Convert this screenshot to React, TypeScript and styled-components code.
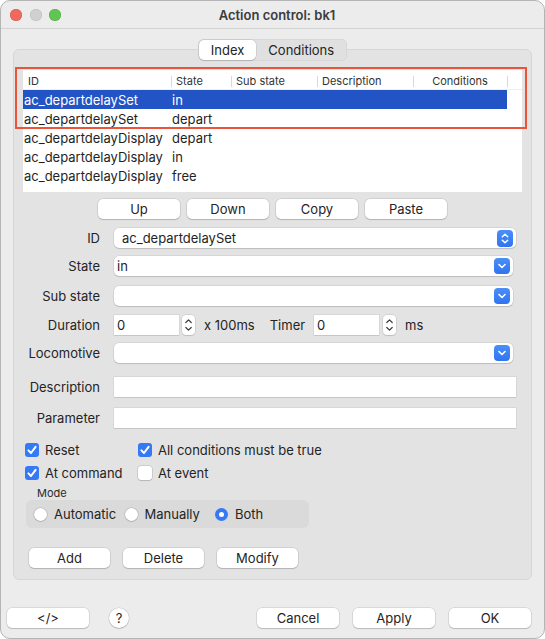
import React from 'react';
import styled, { createGlobalStyle } from 'styled-components';

const GlobalStyle = createGlobalStyle`
  * { box-sizing: border-box; }
  html, body { margin: 0; padding: 0; background: #ffffff; }
  body {
    font-family: Inter, "Liberation Sans", Arial, sans-serif;
    font-size: 13px;
    color: #242424;
  }
`;

const Window = styled.div`
  width: 545px;
  height: 639px;
  background: #ececec;
  border: 1px solid #b4b4b4;
  border-radius: 10px;
  overflow: hidden;
  display: flex;
  flex-direction: column;
`;

const TitleBar = styled.div`
  height: 28px;
  border-bottom: 1px solid #d3d3d3;
  display: grid;
  grid-template-columns: 1fr auto 1fr;
  align-items: center;
  padding-left: 9px;
`;

const Lights = styled.div`
  display: flex;
  gap: 7.5px;
`;

const Light = styled.span<{ $color: string; $edge: string }>`
  width: 12px;
  height: 12px;
  border-radius: 50%;
  background: ${p => p.$color};
  box-shadow: inset 0 0 0 0.5px ${p => p.$edge};
`;

const Title = styled.div`
  font-weight: 600;
  font-size: 13px;
  color: #3b3b3b;
`;

const TabBar = styled.div`
  align-self: center;
  margin-top: 10px;
  margin-bottom: -12px;
  position: relative;
  z-index: 1;
  display: flex;
  padding: 1px;
  height: 22px;
  background: #e0e0e0;
  border-radius: 6px;
  box-shadow: inset 0 0 0 0.5px #cfcfcf;
`;

const Tab = styled.div<{ $active?: boolean }>`
  height: 20px;
  padding: 0 12px;
  display: flex;
  align-items: center;
  border-radius: 5px;
  background: ${p => (p.$active ? '#ffffff' : 'transparent')};
  box-shadow: ${p => (p.$active ? '0 0 0 0.5px rgba(0,0,0,0.12), 0 1px 1px rgba(0,0,0,0.12)' : 'none')};
  color: #242424;
`;

const Panel = styled.div`
  margin: 0 12px;
  background: #e3e3e3;
  border: 1px solid #d6d6d6;
  border-radius: 6px;
  padding: 20px 9px 11px 9px;
  display: flex;
  flex-direction: column;
`;

const Table = styled.div`
  position: relative;
  height: 122px;
  background: #ffffff;
  padding-top: 2px;
`;

const Highlight = styled.div`
  position: absolute;
  left: -8px;
  top: -3px;
  width: 512px;
  height: 62px;
  border: 2px solid #e8553a;
  pointer-events: none;
`;

const HeaderRow = styled.div`
  display: grid;
  grid-template-columns: 148px 60px 86px 96px 94px 1fr;
  height: 18px;
  border-bottom: 1px solid #efefef;
  font-size: 11px;
  color: #333;
`;

const HeaderCell = styled.div<{ $sep?: boolean; $center?: boolean }>`
  position: relative;
  display: flex;
  align-items: center;
  justify-content: ${p => (p.$center ? 'center' : 'flex-start')};
  padding-left: ${p => (p.$center ? '0' : '5px')};

  &::before {
    content: '';
    display: ${p => (p.$sep ? 'block' : 'none')};
    position: absolute;
    left: 0;
    top: 4px;
    width: 1px;
    height: 11px;
    background: #d8d8d8;
  }
`;

const Row = styled.div<{ $selected?: boolean }>`
  display: grid;
  grid-template-columns: 148px 60px 86px 96px 94px;
  width: 484px;
  height: 19px;
  align-items: center;
  background: ${p => (p.$selected ? '#2254c6' : 'transparent')};
  color: ${p => (p.$selected ? '#ffffff' : '#1f1f1f')};
`;

const Cell = styled.div`
  padding-left: 1px;
  white-space: nowrap;
`;

const ButtonRow = styled.div<{ $mt: number; $gap: number; $justify?: string; $ml?: number }>`
  display: flex;
  gap: ${p => p.$gap}px;
  justify-content: ${p => p.$justify || 'flex-start'};
  margin-top: ${p => p.$mt}px;
  margin-left: ${p => p.$ml || 0}px;
`;

const Button = styled.button<{ $w?: number }>`
  width: ${p => p.$w || 82}px;
  height: 20px;
  padding: 0;
  border: none;
  border-radius: 5px;
  background: #ffffff;
  box-shadow: 0 0 0 0.5px rgba(0, 0, 0, 0.16), 0 1px 1px rgba(0, 0, 0, 0.14);
  font-family: inherit;
  font-size: 13px;
  color: #242424;
`;

const FormRow = styled.div<{ $mt: number }>`
  display: flex;
  align-items: center;
  height: 20px;
  margin-top: ${p => p.$mt}px;
`;

const Label = styled.div`
  width: 77px;
  margin-right: 14px;
  text-align: right;
  white-space: nowrap;
`;

const Combo = styled.div<{ $w: number; $pl: number }>`
  width: ${p => p.$w}px;
  height: 20px;
  display: flex;
  align-items: center;
  justify-content: space-between;
  padding: 0 3px 0 ${p => p.$pl}px;
  background: #ffffff;
  border-radius: 5px;
  box-shadow: 0 0 0 0.5px rgba(0, 0, 0, 0.12), 0 1px 1px rgba(0, 0, 0, 0.12);
`;

const BlueKnob = styled.div<{ $h: number }>`
  width: 16px;
  height: ${p => p.$h}px;
  border-radius: 4px;
  background: linear-gradient(#4a8ff8, #2f74f0);
  display: flex;
  align-items: center;
  justify-content: center;
`;

const TextField = styled.div<{ $w: number }>`
  width: ${p => p.$w}px;
  height: 20px;
  background: #ffffff;
  padding-left: 3px;
  display: flex;
  align-items: center;
  box-shadow: 0 0 0 0.5px rgba(0, 0, 0, 0.1), 0 1px 0 rgba(0, 0, 0, 0.08);
`;

const Stepper = styled.div<{ $ml: number }>`
  width: 13px;
  height: 20px;
  margin-left: ${p => p.$ml}px;
  background: #ffffff;
  border-radius: 4px;
  box-shadow: 0 0 0 0.5px rgba(0, 0, 0, 0.14), 0 1px 1px rgba(0, 0, 0, 0.1);
  display: flex;
`;

const Unit = styled.span<{ $ml: number }>`
  margin-left: ${p => p.$ml}px;
  white-space: nowrap;
`;

const Checks = styled.div`
  display: grid;
  grid-template-columns: 113px auto;
  row-gap: 9px;
  margin-top: 15px;
  margin-left: 2px;
`;

const CheckItem = styled.div`
  display: flex;
  align-items: center;
  gap: 6px;
  height: 14px;
`;

const Box = styled.div<{ $on?: boolean }>`
  width: 14px;
  height: 14px;
  border-radius: 3px;
  background: ${p => (p.$on ? '#3479f5' : '#ffffff')};
  box-shadow: ${p => (p.$on ? 'none' : '0 0 0 0.5px rgba(0,0,0,0.2), 0 1px 1px rgba(0,0,0,0.1)')};
  display: flex;
  align-items: center;
  justify-content: center;
`;

const ModeLabel = styled.div`
  font-size: 11px;
  margin: 7px 0 1px 14px;
  height: 12px;
  line-height: 12px;
  color: #2a2a2a;
`;

const Group = styled.div`
  width: 283px;
  height: 28px;
  margin-left: 3px;
  padding-left: 8px;
  background: #dadada;
  border-radius: 6px;
  display: grid;
  grid-template-columns: repeat(3, 90.5px);
  align-items: center;
`;

const RadioItem = styled.div`
  display: flex;
  align-items: center;
  gap: 7px;
`;

const Radio = styled.div<{ $on?: boolean }>`
  width: 13px;
  height: 13px;
  border-radius: 50%;
  background: ${p => (p.$on ? '#3479f5' : '#ffffff')};
  box-shadow: ${p => (p.$on ? 'none' : '0 0 0 0.5px rgba(0,0,0,0.2), 0 1px 1px rgba(0,0,0,0.1)')};
  display: flex;
  align-items: center;
  justify-content: center;

  &::after {
    content: '';
    display: ${p => (p.$on ? 'block' : 'none')};
    width: 5px;
    height: 5px;
    border-radius: 50%;
    background: #ffffff;
  }
`;

const Footer = styled.div`
  margin-top: auto;
  padding: 0 13px 10px 6px;
  display: flex;
  align-items: center;
`;

const HelpButton = styled.div`
  width: 20px;
  height: 20px;
  margin-left: 20px;
  border-radius: 50%;
  background: #ffffff;
  box-shadow: 0 0 0 0.5px rgba(0, 0, 0, 0.16), 0 1px 1px rgba(0, 0, 0, 0.14);
  display: flex;
  align-items: center;
  justify-content: center;
  font-size: 13px;
`;

const Spacer = styled.div`
  flex: 1;
`;

const ChevronDown = () => (
  <svg width="16" height="16" viewBox="0 0 16 16">
    <path d="M5 6.5 L8 9.5 L11 6.5" fill="none" stroke="#fff" strokeWidth="1.6" strokeLinecap="round" strokeLinejoin="round" />
  </svg>
);

const UpDown = () => (
  <svg width="16" height="17" viewBox="0 0 16 17">
    <path d="M5.3 6.8 L8 4.2 L10.7 6.8 M5.3 10.2 L8 12.8 L10.7 10.2" fill="none" stroke="#fff" strokeWidth="1.5" strokeLinecap="round" strokeLinejoin="round" />
  </svg>
);

const SmallStepper = () => (
  <svg width="13" height="20" viewBox="0 0 13 20">
    <path d="M3.8 7.5 L6.5 4.8 L9.2 7.5 M3.8 12.5 L6.5 15.2 L9.2 12.5" fill="none" stroke="#3a3a3a" strokeWidth="1.2" strokeLinecap="round" strokeLinejoin="round" />
  </svg>
);

const Tick = () => (
  <svg width="14" height="14" viewBox="0 0 14 14">
    <path d="M3.4 7.4 L6 10 L10.6 3.8" fill="none" stroke="#fff" strokeWidth="2" strokeLinecap="round" strokeLinejoin="round" />
  </svg>
);

const rows = [
  { id: 'ac_departdelaySet', state: 'in' },
  { id: 'ac_departdelaySet', state: 'depart' },
  { id: 'ac_departdelayDisplay', state: 'depart' },
  { id: 'ac_departdelayDisplay', state: 'in' },
  { id: 'ac_departdelayDisplay', state: 'free' },
];

const Check = ({ on, label }: { on?: boolean; label: string }) => (
  <CheckItem>
    <Box $on={on}>{on && <Tick />}</Box>
    <span>{label}</span>
  </CheckItem>
);

export default function App() {
  return (
    <>
      <GlobalStyle />
      <Window>
        <TitleBar>
          <Lights>
            <Light $color="#ee6a5f" $edge="#d9564b" />
            <Light $color="#d0d0d0" $edge="#bdbdbd" />
            <Light $color="#61c554" $edge="#4eae42" />
          </Lights>
          <Title>Action control: bk1</Title>
          <div />
        </TitleBar>

        <TabBar>
          <Tab $active>Index</Tab>
          <Tab>Conditions</Tab>
        </TabBar>

        <Panel>
          <Table>
            <HeaderRow>
              <HeaderCell>ID</HeaderCell>
              <HeaderCell $sep>State</HeaderCell>
              <HeaderCell $sep>Sub state</HeaderCell>
              <HeaderCell $sep>Description</HeaderCell>
              <HeaderCell $sep $center>Conditions</HeaderCell>
              <HeaderCell $sep />
            </HeaderRow>
            {rows.map((r, i) => (
              <Row key={i} $selected={i === 0}>
                <Cell>{r.id}</Cell>
                <Cell>{r.state}</Cell>
                <Cell />
                <Cell />
                <Cell />
              </Row>
            ))}
            <Highlight />
          </Table>

          <ButtonRow $mt={7} $gap={7} $justify="center">
            <Button>Up</Button>
            <Button>Down</Button>
            <Button>Copy</Button>
            <Button>Paste</Button>
          </ButtonRow>

          <FormRow $mt={9}>
            <Label>ID</Label>
            <Combo $w={402} $pl={8}>
              <span>ac_departdelaySet</span>
              <BlueKnob $h={17}><UpDown /></BlueKnob>
            </Combo>
          </FormRow>
          <FormRow $mt={8}>
            <Label>State</Label>
            <Combo $w={399} $pl={3}>
              <span>in</span>
              <BlueKnob $h={16}><ChevronDown /></BlueKnob>
            </Combo>
          </FormRow>
          <FormRow $mt={10}>
            <Label>Sub state</Label>
            <Combo $w={399} $pl={3}>
              <span />
              <BlueKnob $h={16}><ChevronDown /></BlueKnob>
            </Combo>
          </FormRow>
          <FormRow $mt={9}>
            <Label>Duration</Label>
            <TextField $w={65}>0</TextField>
            <Stepper $ml={3}><SmallStepper /></Stepper>
            <Unit $ml={9}>x 100ms</Unit>
            <Unit $ml={15}>Timer</Unit>
            <Unit $ml={9}>
              <TextField $w={65}>0</TextField>
            </Unit>
            <Stepper $ml={4}><SmallStepper /></Stepper>
            <Unit $ml={9}>ms</Unit>
          </FormRow>
          <FormRow $mt={8}>
            <Label>Locomotive</Label>
            <Combo $w={399} $pl={3}>
              <span />
              <BlueKnob $h={16}><ChevronDown /></BlueKnob>
            </Combo>
          </FormRow>
          <FormRow $mt={14}>
            <Label>Description</Label>
            <TextField $w={402} />
          </FormRow>
          <FormRow $mt={11}>
            <Label>Parameter</Label>
            <TextField $w={402} />
          </FormRow>

          <Checks>
            <Check on label="Reset" />
            <Check on label="All conditions must be true" />
            <Check on label="At command" />
            <Check label="At event" />
          </Checks>

          <ModeLabel>Mode</ModeLabel>
          <Group>
            <RadioItem><Radio /><span>Automatic</span></RadioItem>
            <RadioItem><Radio /><span>Manually</span></RadioItem>
            <RadioItem><Radio $on /><span>Both</span></RadioItem>
          </Group>

          <ButtonRow $mt={20} $gap={13} $ml={6}>
            <Button $w={81}>Add</Button>
            <Button $w={81}>Delete</Button>
            <Button $w={81}>Modify</Button>
          </ButtonRow>
        </Panel>

        <Footer>
          <Button>&lt;/&gt;</Button>
          <HelpButton>?</HelpButton>
          <Spacer />
          <ButtonRow $mt={0} $gap={14}>
            <Button>Cancel</Button>
            <Button>Apply</Button>
            <Button>OK</Button>
          </ButtonRow>
        </Footer>
      </Window>
    </>
  );
}
